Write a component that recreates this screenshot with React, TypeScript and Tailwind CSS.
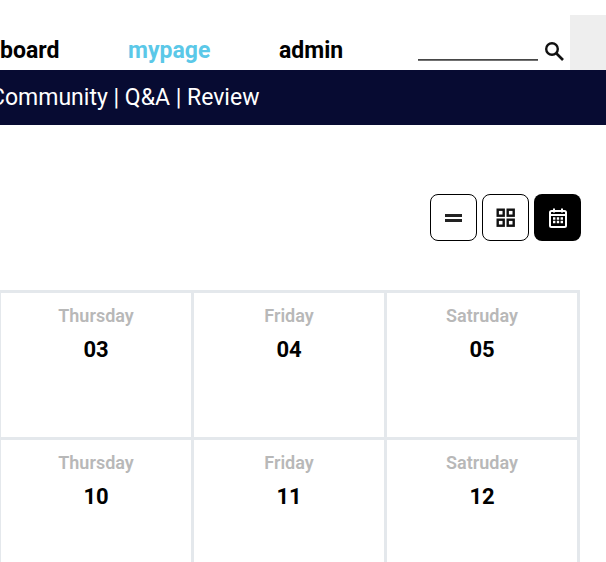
const weeks = [
  [
    { day: "Thursday", date: "03" },
    { day: "Friday", date: "04" },
    { day: "Satruday", date: "05" },
  ],
  [
    { day: "Thursday", date: "10" },
    { day: "Friday", date: "11" },
    { day: "Satruday", date: "12" },
  ],
];

function SearchIcon() {
  return (
    <svg className="mt-[41px] ml-[6px]" width="22" height="22" viewBox="0 0 22 22" fill="none" stroke="#111" strokeWidth="2.4">
      <circle cx="8" cy="8" r="5.8" />
      <path d="M12.5 12.5l6.5 6.5" strokeWidth="2.6" />
    </svg>
  );
}

function GridIcon() {
  return (
    <svg width="20" height="20" viewBox="0 0 20 20" fill="none" stroke="currentColor" strokeWidth="2.4">
      <rect x="1.7" y="1.7" width="6" height="6" />
      <rect x="11.7" y="1.7" width="6" height="6" />
      <rect x="1.7" y="11.7" width="6" height="6" />
      <rect x="11.7" y="11.7" width="6" height="6" />
    </svg>
  );
}

function CalendarIcon() {
  return (
    <svg width="22" height="22" viewBox="0 0 22 22" fill="none" stroke="currentColor" strokeWidth="2">
      <rect x="3" y="4" width="16" height="16" rx="1.5" />
      <path d="M3 8h16M7 1.5v4M15 1.5v4" />
      <path
        d="M6 11.5h2.4M9.8 11.5h2.4M13.6 11.5h2.4M6 15h2.4M9.8 15h2.4M13.6 15h2.4"
        strokeWidth="2.4"
      />
    </svg>
  );
}

export default function App() {
  return (
    <div className="h-[562px] w-[606px] overflow-hidden bg-white font-['Roboto',sans-serif]">
      <header className="flex h-[70px]">
        <nav className="flex items-start pt-[36px] text-[23px] leading-[30px] font-bold text-black">
          <span className="w-[128px]">board</span>
          <span className="w-[151px] text-[#5bc8e8]">mypage</span>
          <span className="w-[139px]">admin</span>
        </nav>
        <div className="mt-[59px] h-[2px] w-[120px] bg-gradient-to-b from-[#333] to-[#888]" />
        <SearchIcon />
        <div className="mt-[15px] ml-[4px] h-[55px] w-[36px] bg-[#eeeeee]" />
      </header>

      <div className="flex h-[55px] items-center bg-[#070b32] pt-[2px] text-[23px] whitespace-nowrap text-white">
        <span className="ml-[-10px]">Community | Q&amp;A | Review</span>
      </div>

      <div className="mt-[69px] flex justify-end gap-[5px] pr-[25px]">
        <button className="flex h-[47px] w-[47px] items-center justify-center rounded-[8px] border border-black bg-white">
          <span className="h-[8px] w-[17px] border-y-[3px] border-[#222]" />
        </button>
        <button className="flex h-[47px] w-[47px] items-center justify-center rounded-[8px] border border-black bg-white text-[#111]">
          <GridIcon />
        </button>
        <button className="flex h-[47px] w-[47px] items-center justify-center rounded-[8px] bg-black text-white">
          <CalendarIcon />
        </button>
      </div>

      <div className="mt-[49px] w-[580px]">
        {weeks.map((week) => (
          <div
            key={week[0].date}
            className="grid h-[147px] grid-cols-[194px_193px_193px] border-t-[3px] border-[#e4e8ec]"
          >
            {week.map((cell, i) => (
              <div
                key={cell.date}
                className={`flex flex-col items-center border-r-[3px] border-[#e4e8ec] pt-[11px] ${i === 0 ? "border-l" : ""}`}
              >
                <span className="text-[18px] leading-[24px] font-semibold text-[#b8b8b8]">{cell.day}</span>
                <span className="mt-[9px] text-[22px] leading-[26px] font-bold text-black">{cell.date}</span>
              </div>
            ))}
          </div>
        ))}
      </div>
    </div>
  );
}
